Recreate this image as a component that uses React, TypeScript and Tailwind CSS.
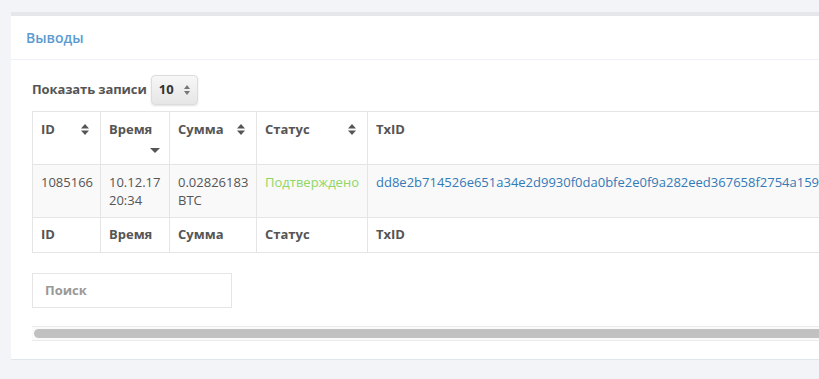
import React from "react";

const SortBoth = () => (
  <svg width="8" height="11" viewBox="0 0 8 11" className="shrink-0">
    <path d="M4 0 L8 4.5 H0 Z" fill="#555" />
    <path d="M4 11 L8 6.5 H0 Z" fill="#555" />
  </svg>
);

const SortDesc = () => (
  <svg width="10" height="5" viewBox="0 0 10 5">
    <path d="M0 0 H10 L5 5 Z" fill="#555" />
  </svg>
);

const txid =
  "dd8e2b714526e651a34e2d9930f0da0bfe2e0f9a282eed367658f2754a1593c1";

const App = () => {
  return (
    <div className="w-[819px] h-[379px] overflow-hidden bg-[#f3f4f8] pl-[11px] pt-[12px] font-['Open_Sans',sans-serif]">
      <div className="w-[1100px] bg-white border-t-4 border-t-[#e5e7ea] border-b border-b-[#e1e5ec]">
        {/* TITLE */}
        <div className="h-[44px] flex items-center px-[15px] border-b border-[#eef1f5]">
          <h2 className="text-[14px] font-semibold text-[#5b9bd1] leading-none">
            Выводы
          </h2>
        </div>

        <div className="pl-[21px] pt-[15px] pb-[18px]">
          {/* SHOW ENTRIES */}
          <div className="flex items-center h-[30px]">
            <span className="text-[13px] font-bold text-[#555] tracking-[-0.1px]">
              Показать записи
            </span>
            <div className="ml-[4px] w-[47px] h-[30px] rounded-[4px] border border-[#dcdcdc] bg-gradient-to-b from-[#f7f7f7] to-[#e6e6e6] shadow-[0_1px_2px_rgba(0,0,0,0.12)] flex items-center justify-between pl-[7px] pr-[7px]">
              <span className="text-[13px] font-bold text-[#333]">10</span>
              <svg width="6" height="10" viewBox="0 0 6 10">
                <path d="M3 0 L6 4 H0 Z" fill="#777" />
                <path d="M3 10 L6 6 H0 Z" fill="#777" />
              </svg>
            </div>
          </div>

          {/* TABLE */}
          <table className="mt-[6px] border-collapse table-fixed w-[1000px] text-[13px] text-[#555]">
            <colgroup>
              <col className="w-[68px]" />
              <col className="w-[69px]" />
              <col className="w-[87px]" />
              <col className="w-[111px]" />
              <col />
            </colgroup>
            <thead>
              <tr className="h-[53px]">
                <th className="border border-[#e5e5e5] align-top text-left font-bold px-[8px] pt-[8px]">
                  <div className="flex items-center justify-between pr-[3px]">
                    <span>ID</span>
                    <SortBoth />
                  </div>
                </th>
                <th className="border border-[#e5e5e5] align-top text-left font-bold px-[8px] pt-[8px]">
                  <div>Время</div>
                  <div className="flex justify-end pr-[1px] mt-[8px]">
                    <SortDesc />
                  </div>
                </th>
                <th className="border border-[#e5e5e5] align-top text-left font-bold px-[8px] pt-[8px]">
                  <div className="flex items-center justify-between pr-[3px]">
                    <span>Сумма</span>
                    <SortBoth />
                  </div>
                </th>
                <th className="border border-[#e5e5e5] align-top text-left font-bold px-[8px] pt-[8px]">
                  <div className="flex items-center justify-between pr-[3px]">
                    <span>Статус</span>
                    <SortBoth />
                  </div>
                </th>
                <th className="border border-[#e5e5e5] align-top text-left font-bold px-[8px] pt-[8px]">
                  TxID
                </th>
              </tr>
            </thead>
            <tbody>
              <tr className="h-[53px] bg-[#f9f9f9]">
                <td className="border border-[#e5e5e5] align-top px-[8px] pt-[8px] leading-[18px]">
                  1085166
                </td>
                <td className="border border-[#e5e5e5] align-top px-[8px] pt-[8px] leading-[18px]">
                  10.12.17
                  <br />
                  20:34
                </td>
                <td className="border border-[#e5e5e5] align-top px-[8px] pt-[8px] leading-[18px]">
                  0.02826183
                  <br />
                  BTC
                </td>
                <td className="border border-[#e5e5e5] align-top px-[8px] pt-[8px] leading-[18px] text-[#8fd664]">
                  Подтверждено
                </td>
                <td className="border border-[#e5e5e5] align-top px-[8px] pt-[8px] leading-[18px] text-[#337ab7] whitespace-nowrap">
                  {txid}
                </td>
              </tr>
            </tbody>
            <tfoot>
              <tr className="h-[35px]">
                <th className="border border-[#e5e5e5] text-left font-bold px-[8px]">ID</th>
                <th className="border border-[#e5e5e5] text-left font-bold px-[8px]">Время</th>
                <th className="border border-[#e5e5e5] text-left font-bold px-[8px]">Сумма</th>
                <th className="border border-[#e5e5e5] text-left font-bold px-[8px]">Статус</th>
                <th className="border border-[#e5e5e5] text-left font-bold px-[8px]">TxID</th>
              </tr>
            </tfoot>
          </table>

          {/* SEARCH */}
          <div className="mt-[20px] w-[200px] h-[35px] border border-[#e5e5e5] flex items-center pl-[12px]">
            <span className="text-[13px] font-bold text-[#999]">Поиск</span>
          </div>

          {/* SCROLLBAR */}
          <div className="mt-[18px] w-[1000px] h-[15px] bg-[#fafafa] border-y border-[#ececec] flex items-center pl-[2px]">
            <div className="w-[990px] h-[9px] rounded-full bg-[#c1c1c1]" />
          </div>
        </div>
      </div>
    </div>
  );
};

export default App;
